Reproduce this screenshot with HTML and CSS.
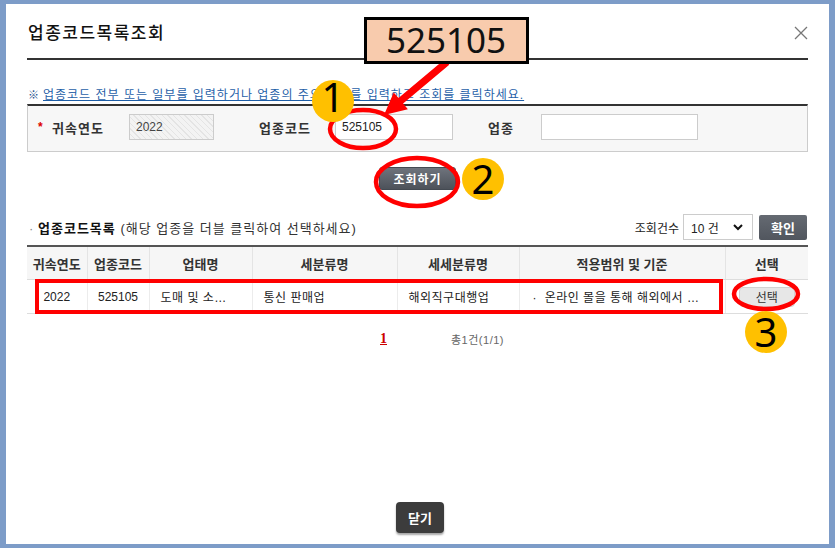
FILE: index.html
```html
<!DOCTYPE html>
<html lang="ko">
<head>
    <meta charset="UTF-8">
    <meta name="viewport" content="width=device-width, initial-scale=1.0">
    <title>업종코드목록조회</title>

    <link rel="stylesheet" href="styles.css">
</head>
<body>

    <div class="dialog">

        <div class="dlg-head">
            <h1>업종코드목록조회</h1>
            <svg class="close" width="14" height="14" viewBox="0 0 14 14" aria-label="닫기">
                <path d="M1 1 L13 13 M13 1 L1 13" stroke="#777" stroke-width="1.3" fill="none"/>
            </svg>
        </div>

        <p class="notice"><span class="notice-ico">※</span>업종코드 전부 또는 일부를 입력하거나 업종의 주요 단어를 입력하고 조회를 클릭하세요.</p>

        <!-- 검색조건 -->
        <div class="search">
            <span class="req">*</span>
            <label class="lbl lbl-year">귀속연도</label>
            <input class="inp inp-year" type="text" value="2022" disabled>
            <label class="lbl lbl-code">업종코드</label>
            <input class="inp inp-code" type="text" value="525105">
            <label class="lbl lbl-name">업종</label>
            <input class="inp inp-name" type="text" value="">
        </div>

        <div class="btn-row">
            <button class="btn-search">조회하기</button>
        </div>

        <!-- 목록 -->
        <div class="list-head">
            <div class="list-title"><span class="dot">·</span><b>업종코드목록</b> (해당 업종을 더블 클릭하여 선택하세요)</div>
            <div class="list-ctrl">
                <span>조회건수</span>
                <div class="select">
                    <span>10 건</span>
                    <svg width="10" height="7" viewBox="0 0 10 7"><path d="M1 1 L5 5 L9 1" stroke="#111" stroke-width="2" fill="none"/></svg>
                </div>
                <button class="btn-ok">확인</button>
            </div>
        </div>

        <table class="grid">
            <colgroup>
                <col style="width:60px">
                <col style="width:62px">
                <col style="width:103px">
                <col style="width:145px">
                <col style="width:122px">
                <col style="width:206px">
                <col style="width:83px">
            </colgroup>
            <thead>
                <tr>
                    <th>귀속연도</th>
                    <th>업종코드</th>
                    <th>업태명</th>
                    <th>세분류명</th>
                    <th>세세분류명</th>
                    <th>적용범위 및 기준</th>
                    <th>선택</th>
                </tr>
            </thead>
            <tbody>
                <tr>
                    <td class="c">2022</td>
                    <td class="c">525105</td>
                    <td>도매 및 소…</td>
                    <td>통신 판매업</td>
                    <td>해외직구대행업</td>
                    <td class="scope">·&nbsp; 온라인 몰을 통해 해외에서 …</td>
                    <td class="c"><button class="btn-pick">선택</button></td>
                </tr>
            </tbody>
        </table>

        <div class="pager">
            <a href="#" class="page-on">1</a>
            <span class="total">총1건(1/1)</span>
        </div>

        <div class="dlg-foot">
            <button class="btn-close">닫기</button>
        </div>
    </div>

    <!-- 안내 표시 -->
    <svg class="marks" width="835" height="548" viewBox="0 0 835 548">
        <polygon points="444.7,59.3 449.3,64.7 403.1,103.5 407.9,109.2 384,115 393.7,92.4 398.5,98.1" fill="#ff0000"/>
        <rect x="365.5" y="18.5" width="162" height="44" fill="#f8cbad" stroke="#000" stroke-width="3"/>
        <text x="446" y="53" class="big-num">525105</text>

        <ellipse cx="363" cy="129" rx="33" ry="19" fill="none" stroke="#ff0000" stroke-width="4.5"/>
        <ellipse cx="417" cy="182" rx="41" ry="24" fill="none" stroke="#ff0000" stroke-width="4.5"/>
        <rect x="37" y="281" width="684" height="31" fill="none" stroke="#ff0000" stroke-width="4"/>
        <ellipse cx="766" cy="294" rx="32" ry="15" fill="none" stroke="#ff0000" stroke-width="4.5"/>

        <circle cx="333" cy="101" r="21" fill="#ffc000"/>
        <text x="333" y="112" class="step">1</text>
        <circle cx="483" cy="179" r="21" fill="#ffc000"/>
        <text x="483" y="194" class="step">2</text>
        <circle cx="766" cy="332" r="21" fill="#ffc000"/>
        <text x="766" y="347" class="step">3</text>
    </svg>

</body>
</html>
```
FILE: styles.css
```css
body {
    margin: 0;
    padding: 0;
    width: 835px;
    height: 548px;
    overflow: hidden;
    position: relative;
    background-color: #7d9cc8;
    font-family: "Liberation Sans", "Noto Sans CJK KR", sans-serif;
    color: #333;
}

.dialog {
    margin: 4px 6px;
    height: 540px;
    background-color: #fff;
    padding: 0 21px;
    box-sizing: border-box;
    display: flex;
    flex-direction: column;
}

/* 제목 */
.dlg-head {
    display: flex;
    align-items: center;
    justify-content: space-between;
    padding: 18px 0 12px;
    border-bottom: 2px solid #333;
}

.dlg-head h1 {
    margin: 0 0 0 1px;
    font-size: 17px;
    line-height: 24px;
    font-weight: 500;
    letter-spacing: 1.5px;
    color: #111;
}

.close {
    margin-top: -3px;
}

.notice {
    margin: 27px 0 1px 1px;
    font-size: 12px;
    line-height: 16px;
    letter-spacing: 1px;
    color: #1f5fa8;
    text-decoration: underline;
}

.notice-ico {
    display: inline-block;
    width: 15px;
    font-size: 11px;
    font-weight: bold;
    letter-spacing: 0;
    color: #1b4f8e;
    text-decoration: none;
}

/* 검색조건 */
.search {
    display: flex;
    align-items: center;
    border: 1px solid #ccc;
    border-top: 2px solid #333;
    background-color: #f7f7f7;
    padding: 8px 0 11px 10px;
}

.req {
    color: #d00;
    font-weight: bold;
    font-size: 12px;
    width: 14px;
}

.lbl {
    font-size: 13px;
    font-weight: bold;
    letter-spacing: 1px;
    color: #333;
}

.lbl-year { width: 77px; }
.lbl-code { margin-left: 45px; width: 76px; }
.lbl-name { margin-left: 35px; width: 53px; }

.inp {
    height: 26px;
    box-sizing: border-box;
    border: 1px solid #ccc;
    background-color: #fff;
    font-family: "Liberation Sans", sans-serif;
    font-size: 12px;
    color: #222;
    padding: 0 6px;
}

.inp-year {
    width: 85px;
    color: #444;
    background: repeating-linear-gradient(45deg, #f3f3f3 0 3px, #e4e4e4 3px 4px);
}

.inp-code { width: 118px; }
.inp-name { width: 157px; }

/* 버튼 */
.btn-row {
    display: flex;
    justify-content: center;
    margin-top: 15px;
}

.btn-search {
    width: 77px;
    height: 23px;
    border: 1px solid #444a52;
    border-radius: 3px;
    background: linear-gradient(#6e737c, #4d525a);
    color: #fff;
    font-family: "Noto Sans CJK KR", sans-serif;
    font-size: 12px;
    font-weight: bold;
    letter-spacing: 1px;
    padding: 0;
}

.list-head {
    display: flex;
    align-items: center;
    justify-content: space-between;
    margin-top: 24px;
    height: 26px;
}

.list-title {
    font-size: 13px;
    letter-spacing: 1px;
    color: #333;
}

.list-title b {
    font-size: 13px;
    color: #111;
}

.dot {
    display: inline-block;
    width: 9px;
    margin-left: 2px;
    letter-spacing: 0;
    color: #888;
}

.list-ctrl {
    display: flex;
    align-items: center;
    font-size: 12px;
    color: #222;
}

.select {
    display: flex;
    align-items: center;
    justify-content: space-between;
    width: 70px;
    height: 26px;
    box-sizing: border-box;
    margin-left: 4px;
    padding: 0 9px 0 7px;
    border: 1px solid #ccc;
    background-color: #fff;
    font-size: 12px;
    color: #222;
}

.btn-ok {
    width: 48px;
    height: 25px;
    margin-left: 6px;
    margin-right: 1px;
    border: none;
    border-radius: 2px;
    background: linear-gradient(#656a72, #51565e);
    color: #fff;
    font-family: "Noto Sans CJK KR", sans-serif;
    font-size: 13px;
    font-weight: bold;
    padding: 0;
}

/* 목록 테이블 */
.grid {
    margin-top: 5px;
    width: 781px;
    table-layout: fixed;
    border-collapse: collapse;
    border-top: 2px solid #555;
}

.grid th {
    height: 32px;
    padding: 0;
    font-size: 13px;
    color: #333;
    background-color: #f6f6f6;
    border-bottom: 1px solid #ddd;
    border-left: 1px solid #e4e4e4;
    white-space: nowrap;
}

.grid td {
    height: 33px;
    padding: 0 11px;
    font-size: 12px;
    letter-spacing: 0.5px;
    color: #222;
    border-bottom: 1px solid #ddd;
    border-left: 1px solid #ececec;
    white-space: nowrap;
    overflow: hidden;
}

.grid th:first-child,
.grid td:first-child {
    border-left: none;
}

.grid td.c {
    text-align: center;
    padding: 0;
    letter-spacing: 0;
}

.grid td.scope {
    padding-left: 13px;
}

.btn-pick {
    width: 56px;
    height: 20px;
    border: 1px solid #d2d2d2;
    border-radius: 4px;
    background-color: #e7e7e7;
    color: #333;
    font-family: "Noto Sans CJK KR", sans-serif;
    font-size: 12px;
    padding: 0;
}

.pager {
    display: flex;
    align-items: center;
    margin-top: 17px;
    padding-left: 353px;
    height: 16px;
}

.page-on {
    font-family: "Liberation Serif", serif;
    font-size: 14px;
    font-weight: bold;
    color: #c00;
}

.total {
    margin-left: 64px;
    font-size: 11px;
    letter-spacing: 0.5px;
    color: #666;
}

.dlg-foot {
    margin-top: auto;
    padding-bottom: 11px;
    display: flex;
    justify-content: center;
}

.btn-close {
    width: 48px;
    height: 31px;
    margin-left: 5px;
    border: none;
    border-radius: 4px;
    background-color: #3c3c3c;
    box-shadow: 0 2px 2px rgba(0, 0, 0, 0.35);
    color: #fff;
    font-family: "Noto Sans CJK KR", sans-serif;
    font-size: 13px;
    font-weight: bold;
    padding: 0;
}

/* 안내 표시 (화면 위에 겹침) */
.marks {
    position: absolute;
    top: 0;
    left: 0;
    pointer-events: none;
}

.big-num {
    font-family: "Noto Sans", sans-serif;
    font-size: 35px;
    fill: #111;
    text-anchor: middle;
}

.step {
    font-family: "Noto Sans", sans-serif;
    font-size: 40px;
    fill: #000;
    text-anchor: middle;
}
```
